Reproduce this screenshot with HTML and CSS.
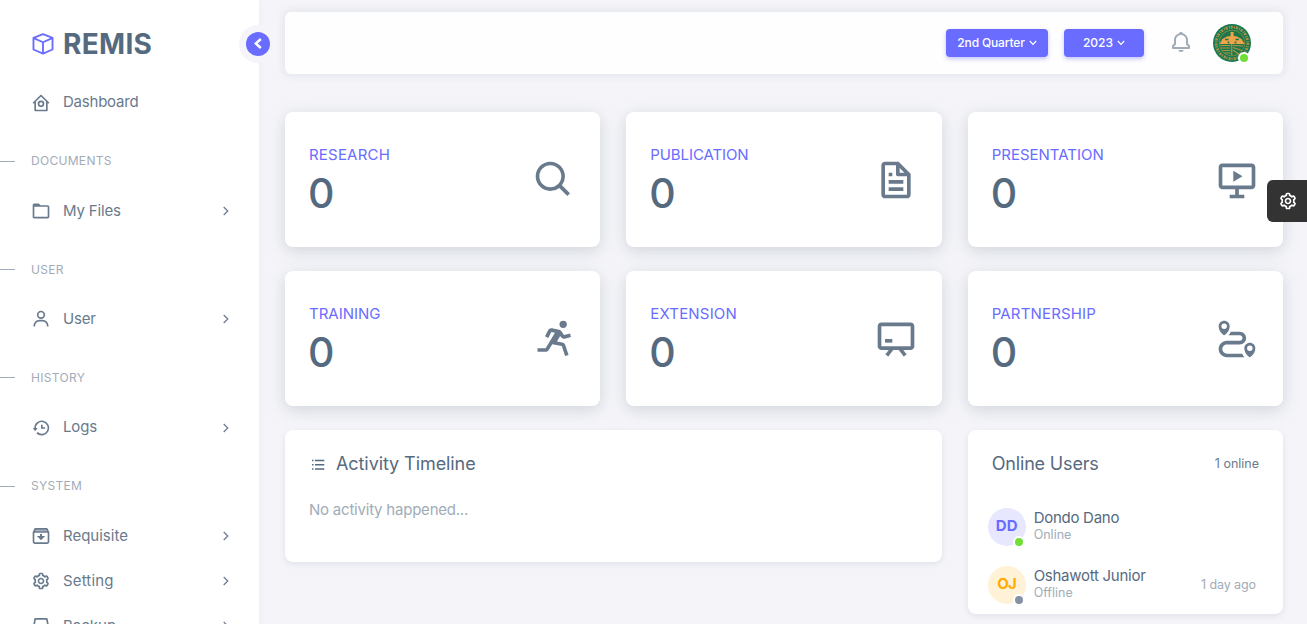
FILE: index.html
```html
<!DOCTYPE html>
<html lang="en">
<head>
<meta charset="utf-8">
<title>REMIS</title>
<link rel="stylesheet" href="styles.css">
</head>
<body>
<svg class="defs" width="0" height="0">
  <symbol id="cog" viewBox="0 0 24 24"><path d="M12 16c2.206 0 4-1.794 4-4s-1.794-4-4-4-4 1.794-4 4 1.794 4 4 4zm0-6c1.084 0 2 .916 2 2s-.916 2-2 2-2-.916-2-2 .916-2 2-2z"/><path d="m2.845 16.136 1 1.73c.531.917 1.809 1.261 2.73.73l.529-.306A8.1 8.1 0 0 0 9 19.402V20c0 1.103.897 2 2 2h2c1.103 0 2-.897 2-2v-.598a8.132 8.132 0 0 0 1.896-1.111l.529.306c.923.53 2.198.188 2.731-.731l.999-1.729a2.001 2.001 0 0 0-.731-2.732l-.505-.292a7.718 7.718 0 0 0 0-2.224l.505-.292a2.002 2.002 0 0 0 .731-2.732l-.999-1.729c-.531-.92-1.808-1.265-2.731-.732l-.529.306A8.1 8.1 0 0 0 15 4.598V4c0-1.103-.897-2-2-2h-2c-1.103 0-2 .897-2 2v.598a8.132 8.132 0 0 0-1.896 1.111l-.529-.306c-.924-.531-2.2-.187-2.731.732l-.999 1.729a2.001 2.001 0 0 0 .731 2.732l.505.292a7.683 7.683 0 0 0 0 2.223l-.505.292a2.003 2.003 0 0 0-.731 2.733zm3.326-2.758A5.703 5.703 0 0 1 6 12c0-.462.058-.926.17-1.378a.999.999 0 0 0-.47-1.108l-1.123-.65.998-1.729 1.145.662a.997.997 0 0 0 1.188-.142 6.071 6.071 0 0 1 2.384-1.399A1 1 0 0 0 11 5.3V4h2v1.3a1 1 0 0 0 .708.956 6.083 6.083 0 0 1 2.384 1.399.999.999 0 0 0 1.188.142l1.144-.661 1 1.729-1.124.649a1 1 0 0 0-.47 1.108c.112.452.17.916.17 1.378 0 .461-.058.925-.171 1.378a1 1 0 0 0 .471 1.108l1.123.649-.998 1.729-1.145-.661a.996.996 0 0 0-1.188.142 6.071 6.071 0 0 1-2.384 1.399A1 1 0 0 0 13 18.7l.002 1.3H11v-1.3a1 1 0 0 0-.708-.956 6.083 6.083 0 0 1-2.384-1.399.992.992 0 0 0-1.188-.141l-1.144.662-1-1.729 1.124-.651a1 1 0 0 0 .471-1.108z"/></symbol>
  <symbol id="chev" viewBox="0 0 8 10"><path class="line" d="M1.7 1 5.8 5 1.7 9" stroke-width="1.2"/></symbol>
  <symbol id="down" viewBox="0 0 8 6"><path class="line" d="M.8 1 4 4.3 7.2 1" stroke-width="1.2"/></symbol>
</svg>
<div class="layout">
  <aside class="sidebar">
    <div class="brand">
      <svg class="brand-icon" viewBox="0 0 24 24"><path class="line" d="M12 2.900 20.800 6.300V17.100L12 20.900 3.200 17.100V6.300zM3.400 6.500 12 10.400 20.600 6.500M12 10.400V20.800" stroke-width="1.700" stroke-linejoin="round"/></svg>
      <span class="brand-name">REMIS</span>
    </div>
    <div class="toggle"><span class="toggle-dot"><svg viewBox="0 0 10 12"><path class="line" d="M7.800 1 2.800 5.500 7.800 10" stroke-width="2.500"/></svg></span></div>
    <nav class="menu">
      <a class="item"><svg class="icon" viewBox="0 0 24 24"><path class="line" d="M2.600 12.300 12 3l9.400 9.300M5 10.500V21h14V10.500" stroke-width="2" stroke-linejoin="round"/><circle class="line" cx="12" cy="13" r="3" stroke-width="2"/></svg><span class="w-dash">Dashboard</span></a>
      <div class="section">DOCUMENTS</div>
      <a class="item"><svg class="icon" viewBox="0 0 24 24"><path d="M20 5h-8.586L9.707 3.293A.997.997 0 0 0 9 3H4c-1.103 0-2 .897-2 2v14c0 1.103.897 2 2 2h16c1.103 0 2-.897 2-2V7c0-1.103-.897-2-2-2zM4 19V7h16l.002 12H4z"/></svg><span class="w-files">My Files</span><svg class="chev"><use href="#chev"/></svg></a>
      <div class="section">USER</div>
      <a class="item"><svg class="icon" viewBox="0 0 24 24"><path d="M12 2a5 5 0 1 0 5 5 5 5 0 0 0-5-5zm0 8a3 3 0 1 1 3-3 3 3 0 0 1-3 3zm9 11v-1a7 7 0 0 0-7-7h-4a7 7 0 0 0-7 7v1h2v-1a5 5 0 0 1 5-5h4a5 5 0 0 1 5 5v1z"/></svg><span class="w-files">User</span><svg class="chev"><use href="#chev"/></svg></a>
      <div class="section">HISTORY</div>
      <a class="item"><svg class="icon" viewBox="0 0 24 24"><path d="M12 8v5h5v-2h-3V8zM2 12h6l-3 4z"/><path class="line" d="M5 12.500A8 8 0 1 1 7.300 17.600M7.300 17.600A8 8 0 0 0 9 19.200" stroke-width="2"/></svg><span class="w-files">Logs</span><svg class="chev"><use href="#chev"/></svg></a>
      <div class="section">SYSTEM</div>
      <a class="item"><svg class="icon" viewBox="0 0 24 24"><path class="line" d="M3 7.500V19a1.500 1.500 0 0 0 1.500 1.500h15A1.500 1.500 0 0 0 21 19V7.500L19 3.500H5zM3 7.200h18" stroke-width="2" stroke-linejoin="round"/><path d="M5 4h14l1.500 3h-17z" opacity=".6"/><path d="M10.800 9.500h2.400v2.500H17l-5 5-5-5h3.800z"/></svg><span>Requisite</span><svg class="chev"><use href="#chev"/></svg></a>
      <a class="item"><svg class="icon"><use href="#cog"/></svg><span class="w-setting">Setting</span><svg class="chev"><use href="#chev"/></svg></a>
      <a class="item"><svg class="icon" viewBox="0 0 24 24"><path class="line" d="M3 14 5 3.500h14L21 14v7H3zM3 14h18" stroke-width="2" stroke-linejoin="round"/></svg><span>Backup</span><svg class="chev"><use href="#chev"/></svg></a>
    </nav>
  </aside>

  <main class="main">
    <header class="navbar">
      <button class="btn quarter">2nd Quarter <svg><use href="#down"/></svg></button>
      <button class="btn year">2023 <svg><use href="#down"/></svg></button>
      <svg class="bell" viewBox="0 0 24 24"><path d="M19 13.586V10c0-3.217-2.185-5.927-5.145-6.742C13.562 2.520 12.846 2 12 2s-1.562.520-1.855 1.258C7.185 4.074 5 6.783 5 10v3.586l-1.707 1.707A.996.996 0 0 0 3 16v2a1 1 0 0 0 1 1h16a1 1 0 0 0 1-1v-2a.996.996 0 0 0-.293-.707L19 13.586zM19 17H5v-.586l1.707-1.707A.996.996 0 0 0 7 14v-4c0-2.757 2.243-5 5-5s5 2.243 5 5v4c0 .266.105.520.293.707L19 16.414V17zm-7 5a2.980 2.980 0 0 0 2.818-2H9.182A2.980 2.980 0 0 0 12 22z"/></svg>
      <div class="avatar">
        <svg viewBox="0 0 38 38">
          <circle cx="19" cy="19" r="19" fill="#187a50"/>
          <circle cx="19" cy="19" r="15.800" fill="none" stroke="#a99147" stroke-width="2.800" stroke-dasharray="2 1.300 1 .900"/>
          <circle cx="19" cy="19" r="12.800" fill="#1d7548" stroke="#8d9045" stroke-width=".8"/>
          <path d="M17.600 8h3v4l3.400.500 4.500 2.500 3 5H6.500l3-5 4.500-2.500 3.600-.500z" fill="#f0a348"/>
          <path d="M12 15.500h3.500M22.500 15.500H26M15.500 17.500v2M22.500 17.500v2" stroke="#187a50" stroke-width="1.600"/>
          <path d="M7.500 21.500h10M8 24h9M9.500 26.500h8M11.500 29h6M20 21.500l10 .500M20 23.500l9 3M20 26l6 4.500" stroke="#a99a48" stroke-width="1.200"/>
          <path d="M18.800 20v11" stroke="#c99c4c"/>
        </svg>
        <i class="dot online"></i>
      </div>
    </header>

    <section class="grid">
      <article class="card stat"><div><h2 class="w-research">RESEARCH</h2><b>0</b></div><svg viewBox="0 0 24 24"><path d="M10 18a7.952 7.952 0 0 0 4.897-1.688l4.396 4.396 1.414-1.414-4.396-4.396A7.952 7.952 0 0 0 18 10c0-4.411-3.589-8-8-8s-8 3.589-8 8 3.589 8 8 8zm0-14c3.309 0 6 2.691 6 6s-2.691 6-6 6-6-2.691-6-6 2.691-6 6-6z"/></svg></article>
      <article class="card stat"><div><h2 class="w-publication">PUBLICATION</h2><b>0</b></div><svg viewBox="0 0 24 24"><path d="M19.903 8.586a.997.997 0 0 0-.196-.293l-6-6a.997.997 0 0 0-.293-.196c-.03-.014-.062-.022-.094-.033a.991.991 0 0 0-.259-.051C13.04 2.011 13.021 2 13 2H6c-1.103 0-2 .897-2 2v16c0 1.103.897 2 2 2h12c1.103 0 2-.897 2-2V9c0-.021-.011-.04-.013-.062a.952.952 0 0 0-.051-.259c-.01-.032-.019-.063-.033-.093zM16.586 8H14V5.414L16.586 8zM6 20V4h6v5a1 1 0 0 0 1 1h5l.002 10H6z"/><path d="M8 12h8v2H8zm0 4h8v2H8zm0-8h2v2H8z"/></svg></article>
      <article class="card stat"><div><h2>PRESENTATION</h2><b>0</b></div><svg viewBox="0 0 24 24"><path d="M20 3H4c-1.103 0-2 .897-2 2v10c0 1.103.897 2 2 2h7v3H8v2h8v-2h-3v-3h7c1.103 0 2-.897 2-2V5c0-1.103-.897-2-2-2zM4 15V5h16v10z"/><path d="m10 13 5-3-5-3z"/></svg></article>
      <article class="card stat"><div><h2>TRAINING</h2><b>0</b></div><svg viewBox="0 0 24 24"><circle cx="17" cy="4" r="2"/><path d="M15.777 10.969a2.007 2.007 0 0 0 2.148.83l3.316-.829-.483-1.940-3.316.829-1.379-2.067a2.010 2.010 0 0 0-1.272-.854l-3.846-.770a1.998 1.998 0 0 0-2.181 1.067l-1.658 3.316 1.789.895 1.658-3.317 1.967.394L7.434 17H3v2h4.434c.698 0 1.355-.372 1.715-.971l1.918-3.196 5.169 1.034 1.816 5.449 1.896-.633-1.815-5.448a2.007 2.007 0 0 0-1.506-1.330l-3.039-.607 1.772-2.954.983 1.475z"/></svg></article>
      <article class="card stat"><div><h2 class="w-extension">EXTENSION</h2><b>0</b></div><svg viewBox="0 0 24 24"><path d="M20 3H4c-1.103 0-2 .897-2 2v11c0 1.103.897 2 2 2h4l-1.800 2.400 1.600 1.200 2.700-3.600h3l2.700 3.600 1.600-1.200L16 18h4c1.103 0 2-.897 2-2V5c0-1.103-.897-2-2-2zM4 16V5h16l.001 11H4z"/><path d="M6 12h4v2H6z"/></svg></article>
      <article class="card stat"><div><h2 class="w-partnership">PARTNERSHIP</h2><b>0</b></div><svg viewBox="0 0 24 24"><path d="M14.844 20H6.500C5.121 20 4 18.879 4 17.500S5.121 15 6.500 15h7c1.930 0 3.500-1.570 3.500-3.500S15.430 8 13.500 8H8.639a9.812 9.812 0 0 1-1.354 2H13.500c.827 0 1.500.673 1.500 1.500s-.673 1.500-1.500 1.500h-7C4.019 13 2 15.019 2 17.500S4.019 22 6.500 22h9.593a10.415 10.415 0 0 1-1.249-2zM5 2C3.346 2 2 3.346 2 5c0 3.188 3 5 3 5s3-1.813 3-5c0-1.654-1.346-3-3-3zm0 4.500a1.500 1.500 0 1 1 .001-3.001A1.500 1.500 0 0 1 5 6.500z"/><path d="M19 14c-1.654 0-3 1.346-3 3 0 3.188 3 5 3 5s3-1.813 3-5c0-1.654-1.346-3-3-3zm0 4.500a1.500 1.500 0 1 1 .001-3.001A1.500 1.500 0 0 1 19 18.500z"/></svg></article>

      <article class="card timeline">
        <h3><svg viewBox="0 0 18 18"><path class="line" d="M3 5.500h1.500M6 5.500h9.300M3 9.800h1.500M6 9.800h9.300M3 14h1.500M6 14h9.300" stroke-width="1.400"/></svg><span>Activity Timeline</span></h3>
        <p>No activity happened...</p>
      </article>
      <article class="card users">
        <div class="users-head"><h3>Online Users</h3><small>1 online</small></div>
        <div class="user"><div class="badge violet">DD<i class="dot online"></i></div><div class="who"><strong>Dondo Dano</strong><small>Online</small></div></div>
        <div class="user"><div class="badge amber">OJ<i class="dot offline"></i></div><div class="who"><strong>Oshawott Junior</strong><small>Offline</small></div><time>1 day ago</time></div>
      </article>
    </section>
  </main>
</div>
<div class="customizer"><svg><use href="#cog"/></svg></div>
</body>
</html>
```
FILE: styles.css
```css
* { box-sizing: border-box; }
body {
  margin: 0;
  height: 624px;
  overflow: hidden;
  background: #f5f5f9;
  color: #697a8d;
  font: 400 15px/1.5 Inter, "Liberation Sans", sans-serif;
}
svg { fill: currentColor; display: block; flex: none; }
.defs { position: absolute; }
.line { fill: none; stroke: currentColor; }
h2, h3, p { margin: 0; font-weight: 400; }

.layout { display: flex; height: 624px; }
.sidebar {
  position: relative;
  width: 259px;
  flex: none;
  background: #fff;
  box-shadow: 0 2px 6px rgba(161, 172, 184, .12);
}
.brand { display: flex; align-items: center; height: 80px; padding: 8px 0 0 30px; }
.brand-icon { width: 26px; height: 26px; color: #696cff; }
.brand-name { margin-left: 7px; color: #566a7f; font-size: 28px; font-weight: 700; letter-spacing: .3px; }
.toggle {
  position: absolute;
  left: 239px;
  top: 25px;
  width: 38px;
  height: 38px;
  padding: 7px;
  border-radius: 50%;
  background: #f5f5f9;
}
.toggle-dot { display: grid; place-items: center; width: 24px; height: 24px; border-radius: 50%; background: #696cff; color: #fff; }
.toggle-dot svg { width: 10px; height: 12px; }
.item { display: flex; align-items: center; height: 45px; padding: 0 29px 0 31px; }
.item span { margin-left: 12px; flex: 1; }
.item .icon { width: 20px; height: 20px; }
.w-dash { letter-spacing: -.22px; }
.w-files { letter-spacing: -.15px; }
.w-setting { letter-spacing: .15px; }
.chev { width: 8px; height: 10px; }
.section {
  display: flex;
  align-items: center;
  height: 63.4px;
  padding-top: 9px;
  color: #a1acb8;
  font-size: 12px;
  letter-spacing: .3px;
}
.section::before { content: ""; width: 15px; height: 1px; margin-right: 16px; background: #a1acb8; }

.main { flex: 1; padding: 12px 24px 0 26px; }
.navbar {
  display: flex;
  align-items: center;
  height: 62px;
  padding: 0 32px 0 661px;
  border-radius: 6px;
  background: #fefefe;
  box-shadow: 0 0 8px 2px rgba(161, 172, 184, .2);
}
.btn {
  display: flex;
  align-items: center;
  justify-content: center;
  gap: 4px;
  height: 28px;
  padding: 0;
  border: 0;
  border-radius: 4px;
  background: #696cff;
  box-shadow: 0 2px 4px rgba(105, 108, 255, .4);
  color: #fff;
  font: 500 12px Inter, "Liberation Sans", sans-serif;
  white-space: nowrap;
}
.btn svg { width: 8px; height: 6px; }
.quarter { width: 102px; padding-bottom: 1px; letter-spacing: -.15px; }
.year { width: 80px; margin-left: 16px; padding-bottom: 1px; }
.bell { width: 24px; height: 24px; margin-left: 25px; margin-bottom: 2px; color: #a1acb8; }
.avatar { position: relative; width: 38px; height: 38px; margin-left: 20px; }
.dot { position: absolute; right: 1px; bottom: -2px; width: 12px; height: 12px; border: 2px solid #fff; border-radius: 50%; }
.online { background: #71dd37; }
.offline { background: #8592a3; }

.grid {
  display: grid;
  grid-template-columns: repeat(3, 1fr);
  grid-template-rows: 135px 135px auto;
  align-items: start;
  gap: 24px 26px;
  margin-top: 38px;
}
.card { border-radius: 8px; background: #fff; box-shadow: 0 2px 6px rgba(67, 89, 113, .12); }
.stat {
  display: flex;
  justify-content: space-between;
  height: 135px;
  padding: 30px 24px 0;
  box-shadow: 0 4px 16px rgba(161, 172, 184, .45);
}
.stat h2 { color: #696cff; font-size: 15px; line-height: 26px; }
.stat .w-research { letter-spacing: .2px; }
.stat .w-publication { letter-spacing: -.1px; }
.stat .w-extension, .stat .w-partnership { letter-spacing: .17px; }
.stat b { display: block; margin-left: -1px; color: #566a7f; font-size: 41px; font-weight: 450; line-height: 50px; letter-spacing: -1px; }
.stat svg { width: 44px; height: 44px; margin-top: 16px; }
.timeline { grid-column: span 2; height: 132px; padding: 20px 24px; }
h3 { display: flex; align-items: center; color: #566a7f; font-size: 18px; line-height: 28px; letter-spacing: -.08px; }
.timeline h3 svg { width: 18px; height: 18px; margin-right: 9px; }
.timeline p { margin-top: 20px; color: #a1acb8; line-height: 24px; letter-spacing: -.22px; }
.users { height: 184px; padding: 20px 24px 0 20px; }
.users-head { display: flex; justify-content: space-between; align-items: center; padding-left: 4px; margin-bottom: 26px; }
.users-head h3 { letter-spacing: -.16px; }
small { font-size: 12.5px; line-height: 16px; }
.user { display: flex; height: 58px; padding-top: 4px; }
.badge { position: relative; width: 38px; height: 38px; border-radius: 50%; font-weight: 700; line-height: 36px; text-align: center; }
.violet { background: #e7e7ff; color: #696cff; }
.amber { background: #fff2d6; color: #ffab00; letter-spacing: -.7px; }
.who { display: flex; flex-direction: column; flex: 1; margin-left: 8px; }
.who strong { color: #566a7f; font-weight: 400; line-height: 19px; letter-spacing: -.27px; }
.who small, time { color: #a1acb8; }
time { margin: 9px 3px 0 0; font-size: 12.5px; line-height: 20px; letter-spacing: -.1px; }
.customizer {
  position: absolute;
  right: 0;
  top: 180px;
  display: grid;
  place-items: center;
  width: 40px;
  height: 42px;
  padding-left: 2px;
  border-radius: 6px 0 0 6px;
  background: #333;
  color: #fff;
}
.customizer svg { width: 20px; height: 20px; }
```
